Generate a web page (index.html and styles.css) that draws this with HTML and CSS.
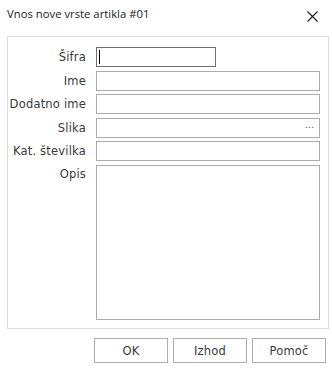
FILE: index.html
```html
<!DOCTYPE html>
<html lang="sl">
<head>
    <meta charset="UTF-8">
    <title>Vnos nove vrste artikla</title>
    <link rel="stylesheet" href="styles.css">
</head>
<body>
    <div class="dialog">
        <div class="titlebar">
            <span class="title">Vnos nove vrste artikla #01</span>
            <svg class="close" width="11" height="11" viewBox="0 0 11 11">
                <path d="M0.5 0.5 L10.5 10.5 M10.5 0.5 L0.5 10.5" stroke="#222" stroke-width="1.2" fill="none"/>
            </svg>
        </div>

        <div class="panel">
            <div class="row">
                <label>Šifra</label>
                <div class="field short focused"><span class="caret"></span></div>
            </div>
            <div class="row">
                <label>Ime</label>
                <div class="field"></div>
            </div>
            <div class="row">
                <label>Dodatno ime</label>
                <div class="field"></div>
            </div>
            <div class="row">
                <label>Slika</label>
                <div class="field browse"><span class="dots">...</span></div>
            </div>
            <div class="row">
                <label>Kat. številka</label>
                <div class="field"></div>
            </div>
            <div class="row memo-row">
                <label>Opis</label>
                <div class="field memo"></div>
            </div>
        </div>

        <div class="buttons">
            <button class="btn">OK</button>
            <button class="btn">Izhod</button>
            <button class="btn">Pomoč</button>
        </div>
    </div>
</body>
</html>
```

FILE: styles.css
```css
body {
    margin: 0;
    background: white;
    font-family: "DejaVu Sans", Tahoma, sans-serif;
    font-size: 11.5px;
    letter-spacing: 0.2px;
    color: #3a3a3a;
}
.dialog {
    width: 332px;
    height: 368px;
    box-sizing: border-box;
    padding: 0 4px 0 7px;
}
.titlebar {
    height: 36px;
    display: flex;
    align-items: center;
    justify-content: space-between;
    padding-bottom: 9px;
    box-sizing: border-box;
}
.title {
    font-family: "Open Sans", "Noto Sans", sans-serif;
    font-size: 11.3px;
    letter-spacing: 0;
    color: #222;
}
.close {
    margin-right: 10px;
    margin-top: 5px;
}
.panel {
    width: 322px;
    height: 293px;
    box-sizing: border-box;
    border: 1px solid #dcdcdc;
    padding: 10px 8px 8px 0;
    display: flex;
    flex-direction: column;
    gap: 3.6px;
}
.row {
    display: flex;
    align-items: center;
    height: 20px;
}
.row label {
    width: 78px;
    text-align: right;
    margin-right: 10px;
    white-space: nowrap;
}
.field {
    flex: 1;
    height: 20px;
    box-sizing: border-box;
    border: 1px solid #ababab;
    background: white;
    position: relative;
}
.field.short {
    flex: none;
    width: 120px;
}
.field.focused {
    border-color: #707070;
}
.caret {
    position: absolute;
    left: 2px;
    top: 2px;
    width: 1px;
    height: 14px;
    background: #000;
}
.dots {
    position: absolute;
    right: 5px;
    top: 1px;
    font-size: 9px;
    color: #444;
}
.memo-row {
    align-items: flex-start;
    height: 155px;
}
.memo-row label {
    margin-top: 2px;
}
.field.memo {
    height: 155px;
}
.buttons {
    display: flex;
    justify-content: flex-end;
    gap: 5px;
    margin-top: 9px;
    padding-right: 2px;
}
.btn {
    width: 74px;
    height: 25px;
    background: white;
    border: 1px solid #adadad;
    font-family: "DejaVu Sans", Tahoma, sans-serif;
    font-size: 11.5px;
    letter-spacing: 0.2px;
    color: #3a3a3a;
}
```
